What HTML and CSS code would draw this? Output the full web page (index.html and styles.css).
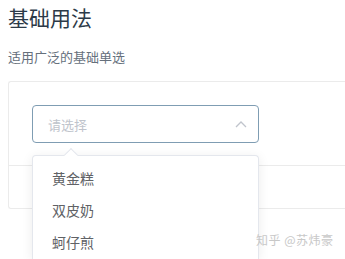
FILE: index.html
```html
<!DOCTYPE html>
<html lang="zh-CN">
<head>
  <meta charset="UTF-8">
  <meta name="viewport" content="width=device-width, initial-scale=1.0">
  <title>基础用法</title>
  <link rel="stylesheet" href="styles.css">
</head>
<body>

  <div class="page">
    <h3 class="title">基础用法</h3>
    <p class="desc">适用广泛的基础单选</p>

    <div class="demo-block">
      <div class="demo-source">
        <div class="select">
          <span class="placeholder">请选择</span>
          <svg class="arrow" width="12" height="8" viewBox="0 0 12 8">
            <path d="M1 7 L6 2 L11 7" fill="none" stroke="#c0c4cc" stroke-width="1.3"/>
          </svg>

          <!-- Dropdown -->
          <div class="dropdown">
            <span class="popper-arrow"></span>
            <ul class="options">
              <li>黄金糕</li>
              <li>双皮奶</li>
              <li>蚵仔煎</li>
            </ul>
          </div>
        </div>
      </div>
      <div class="demo-meta"></div>
    </div>
  </div>

  <div class="watermark">知乎 @苏炜豪</div>

</body>
</html>
```

FILE: styles.css
```css
/* General Styles */
* {
  box-sizing: border-box;
  margin: 0;
  padding: 0;
}

body {
  font-family: "Noto Sans CJK SC", "Noto Sans", sans-serif;
  background-color: #fff;
  overflow: hidden;
  height: 259px;
}

.page {
  padding-left: 8px;
}

/* Headings */
.title {
  font-size: 21px;
  font-weight: 400;
  line-height: 34px;
  color: #2c3a48;
}

.desc {
  margin-top: 13px;
  font-size: 13px;
  line-height: 20px;
  color: #66707c;
}

/* Demo block */
.demo-block {
  margin-top: 14px;
  margin-right: -4px;
  border: 1px solid #ebebeb;
  border-right: none;
  border-radius: 3px 0 0 3px;
}

.demo-source {
  padding: 23px 23px 22px;
  border-bottom: 1px solid #ebebeb;
}

.demo-meta {
  height: 42px;
}

/* Select */
.select {
  position: relative;
  width: 227px;
  height: 38px;
  border: 1px solid #7f9db3;
  border-radius: 4px;
  display: flex;
  align-items: center;
  justify-content: space-between;
  padding: 0 10px 0 15px;
}

.placeholder {
  font-size: 13px;
  color: #c0c4cc;
}

.arrow {
  margin-right: 1px;
}

/* Dropdown */
.dropdown {
  position: absolute;
  top: 49px;
  left: -1px;
  width: 227px;
  background-color: #fff;
  border: 1px solid #e4e7ed;
  border-bottom: none;
  border-radius: 4px 4px 0 0;
  box-shadow: 0 2px 12px rgba(0, 0, 0, 0.08);
}

.popper-arrow {
  position: absolute;
  top: -6px;
  left: 33px;
  width: 10px;
  height: 10px;
  background-color: #fff;
  border-top: 1px solid #e4e7ed;
  border-left: 1px solid #e4e7ed;
  transform: rotate(45deg);
}

.options {
  list-style: none;
  padding: 6px 0 1px;
}

.options li {
  height: 32px;
  line-height: 32px;
  padding-left: 19px;
  font-size: 14px;
  color: #606266;
}

/* Watermark */
.watermark {
  position: absolute;
  left: 256px;
  top: 231px;
  font-size: 12px;
  line-height: 18px;
  color: #c8c8c8;
  letter-spacing: 0.5px;
}
```
